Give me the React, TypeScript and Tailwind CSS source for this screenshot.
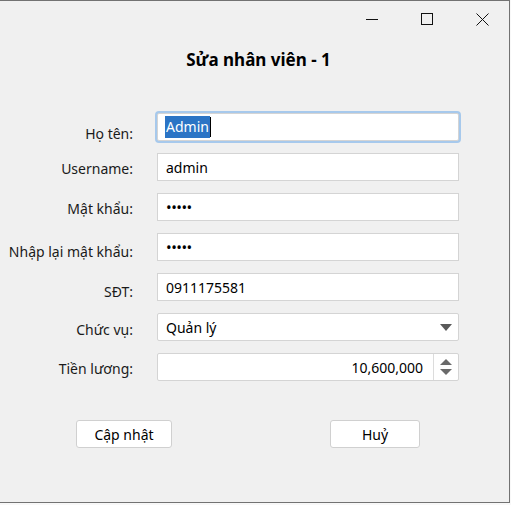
import type { ReactNode } from 'react';

const font = { fontFamily: '"Noto Sans", "Open Sans", Arial, sans-serif' };

function Field({ children, className = '' }: { children: ReactNode; className?: string }) {
  return (
    <div className={`h-[28px] w-[302px] bg-white border border-[#d4d4d4] flex items-center px-[8px] text-[14px] text-black ${className}`}>
      {children}
    </div>
  );
}

function Row({ label, offset, children }: { label: string; offset: string; children: ReactNode }) {
  return (
    <div className="flex items-center h-[28px]">
      <div className={`w-[133px] text-right text-[14px] text-[#1a1a1a] whitespace-nowrap ${offset}`}>{label}</div>
      <div className="ml-[24px]">{children}</div>
    </div>
  );
}

export default function App() {
  return (
    <div className="w-[511px] h-[505px] bg-[#f8f8f8] overflow-hidden" style={font}>
      <div className="w-[510px] h-[503px] bg-[#f0f0f0] border-t border-r border-b border-[#727272] flex flex-col">
        {/* title bar */}
        <div className="h-[37px] flex justify-end items-start gap-[9px] pr-[4px]">
          <div className="w-[46px] h-[36px] flex items-center justify-center">
            <svg width="12" height="12" viewBox="0 0 12 12"><path d="M0 6.5h12" stroke="#111" strokeWidth="1" /></svg>
          </div>
          <div className="w-[46px] h-[36px] flex items-center justify-center">
            <svg width="12" height="12" viewBox="0 0 12 12"><rect x="0.5" y="0.5" width="11" height="11" fill="none" stroke="#111" strokeWidth="1" /></svg>
          </div>
          <div className="w-[46px] h-[36px] flex items-center justify-center">
            <svg width="13" height="13" viewBox="0 0 13 13"><path d="M0.5 0.5l12 12M12.5 0.5l-12 12" stroke="#111" strokeWidth="1" /></svg>
          </div>
        </div>

        <div className="h-[24px] mt-[10px] pl-[8px] text-center text-[17px] font-bold text-black leading-[24px]">Sửa nhân viên - 1</div>

        {/* form */}
        <div className="mt-[41px] flex flex-col gap-[12px]">
          <Row label="Họ tên:" offset="mt-[12px]">
            <Field className="border-[#7fb1e4] rounded-[2px] shadow-[0_0_0_2px_#a7c9ec]">
              <span className="bg-[#2b74c5] text-white px-[1px] -ml-[1px] leading-[22px]">Admin</span>
              <span className="w-[1px] h-[20px] bg-black"></span>
            </Field>
          </Row>
          <Row label="Username:" offset="mt-[3px]">
            <Field>admin</Field>
          </Row>
          <Row label="Mật khẩu:" offset="mt-[3px]">
            <Field><span className="text-[15px] tracking-[-0.5px]">•••••</span></Field>
          </Row>
          <Row label="Nhập lại mật khẩu:" offset="mt-[9px]">
            <Field><span className="text-[15px] tracking-[-0.5px]">•••••</span></Field>
          </Row>
          <Row label="SĐT:" offset="mt-[9px]">
            <Field>0911175581</Field>
          </Row>
          <Row label="Chức vụ:" offset="mt-[5px]">
            <Field className="rounded-[2px] justify-between pr-[6px]">
              <span>Quản lý</span>
              <svg width="12" height="7" viewBox="0 0 12 7"><path d="M0 0h12L6 7z" fill="#5a5a5a" /></svg>
            </Field>
          </Row>
          <Row label="Tiền lương:" offset="mt-[3px]">
            <div className="h-[28px] w-[302px] bg-white border border-[#d4d4d4] rounded-[2px] flex text-[14px] text-black">
              <div className="flex-1 flex items-center justify-end pr-[10px]">10,600,000</div>
              <div className="w-[25px] border-l border-[#dcdcdc] flex flex-col items-center justify-center gap-[4px]">
                <svg width="12" height="6" viewBox="0 0 12 6"><path d="M0 6h12L6 0z" fill="#6a6a6a" /></svg>
                <svg width="12" height="6" viewBox="0 0 12 6"><path d="M0 0h12L6 6z" fill="#6a6a6a" /></svg>
              </div>
            </div>
          </Row>
        </div>

        {/* buttons */}
        <div className="mt-[39px] flex">
          <button className="ml-[76px] w-[96px] h-[28px] bg-white border border-[#d0d0d0] rounded-[3px] text-[14px] text-black">Cập nhật</button>
          <button className="ml-[158px] w-[90px] h-[28px] bg-white border border-[#d0d0d0] rounded-[3px] text-[14px] text-black">Huỷ</button>
        </div>
      </div>
    </div>
  );
}
